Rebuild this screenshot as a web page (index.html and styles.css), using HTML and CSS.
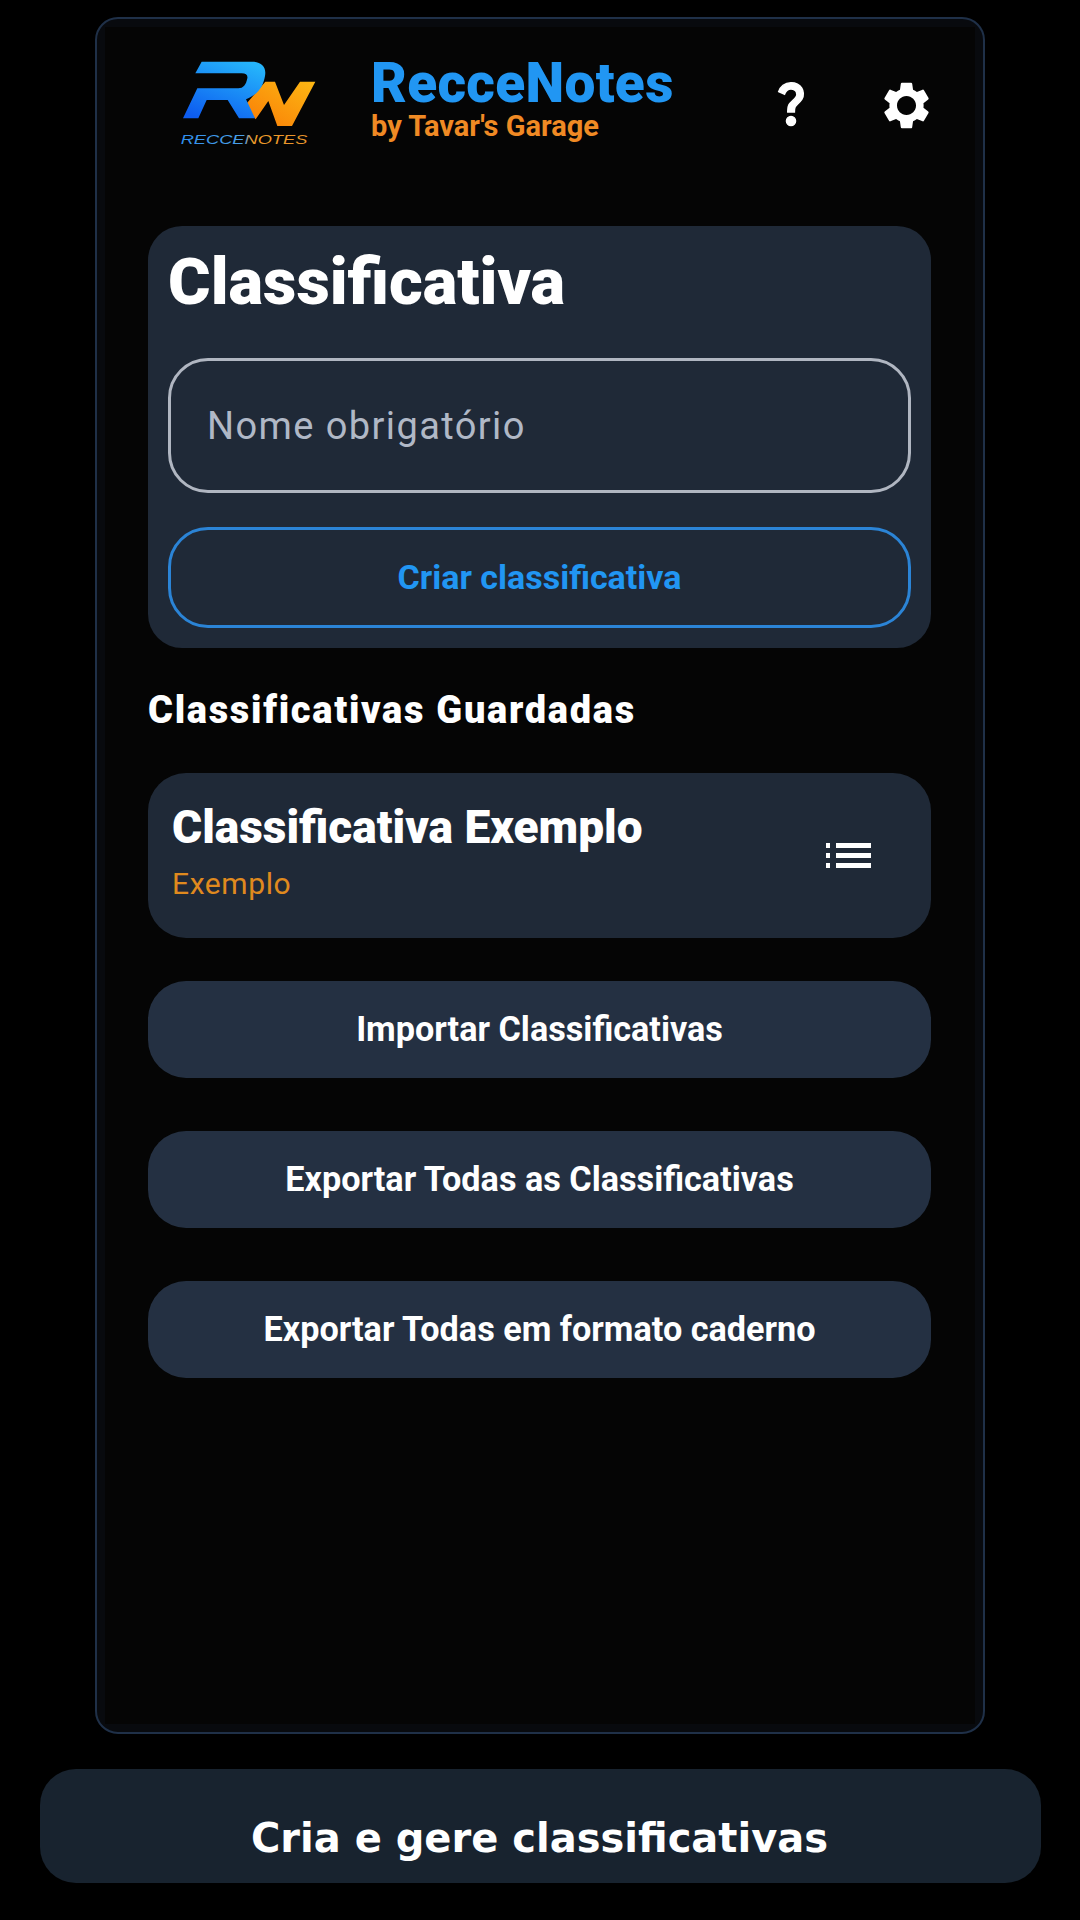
FILE: index.html
```html
<!DOCTYPE html>
<html lang="pt">
<head>
<meta charset="utf-8">
<title>RecceNotes</title>
<link rel="stylesheet" href="styles.css">
</head>
<body>
<main class="frame">
  <div class="screen">
    <header class="header">
      <svg class="logo" viewBox="0 0 540 360" aria-label="RecceNotes">
        <defs>
          <linearGradient id="rGrad" x1="0.75" y1="0" x2="0.2" y2="1">
            <stop offset="0" stop-color="#25b4fb"/>
            <stop offset="1" stop-color="#0d5cf0"/>
          </linearGradient>
          <linearGradient id="nGrad" x1="0" y1="1" x2="1" y2="0">
            <stop offset="0" stop-color="#f97b06"/>
            <stop offset="1" stop-color="#fdb813"/>
          </linearGradient>
          <linearGradient id="tGrad" x1="0" y1="0" x2="1" y2="0">
            <stop offset="0" stop-color="#2f8ef0"/>
            <stop offset="0.5" stop-color="#4aa0e8"/>
            <stop offset="0.56" stop-color="#f09a28"/>
            <stop offset="1" stop-color="#e8912a"/>
          </linearGradient>
        </defs>
        <path fill="url(#nGrad)" d="M254 197L316 125H345L372 195L420 125H466L396 258H352L325 183L287 238Z"/>
        <path fill="url(#rGrad)" d="M125 65H275C305 65 320 82 315 108C310 140 292 165 258 178L285 235H237L203 180H140L115 235H69L112 145H235C250 145 258 135 262 115C264 105 258 100 245 100H106Z"/>
        <text class="logo-text" x="62" y="311" textLength="380" lengthAdjust="spacingAndGlyphs" fill="url(#tGrad)">RECCENOTES</text>
      </svg>
      <div class="brand">
        <div class="brand-name">RecceNotes</div>
        <div class="brand-sub">by Tavar's Garage</div>
      </div>
      <div class="actions">
        <svg class="icon-help" viewBox="0 0 24 24"><path d="M11.07 12.85c.77-1.39 2.25-2.21 3.11-3.44.91-1.29.4-3.7-2.18-3.7-1.69 0-2.52 1.28-2.87 2.34L6.54 6.96C7.25 4.83 9.18 3 11.99 3c2.35 0 3.96 1.07 4.78 2.41.7 1.15 1.11 3.3.03 4.9-1.2 1.77-2.35 2.31-2.97 3.45-.25.46-.35.76-.35 2.24h-2.89c-.01-.78-.13-2.05.48-3.15zM14 20c0 1.1-.9 2-2 2s-2-.9-2-2 .9-2 2-2 2 .9 2 2z"/></svg>
        <svg class="icon-gear" viewBox="0 0 24 24"><path d="M19.14 12.94c.04-.3.06-.61.06-.94 0-.32-.02-.64-.07-.94l2.03-1.58c.18-.14.23-.41.12-.61l-1.92-3.32c-.12-.22-.37-.29-.59-.22l-2.39.96c-.5-.38-1.03-.7-1.62-.94l-.36-2.54c-.04-.24-.24-.41-.48-.41h-3.84c-.24 0-.43.17-.47.41l-.36 2.54c-.59.24-1.13.57-1.62.94l-2.39-.96c-.22-.08-.47 0-.59.22L2.74 8.87c-.12.21-.08.47.12.61l2.03 1.58c-.05.3-.09.63-.09.94s.02.64.07.94l-2.03 1.58c-.18.14-.23.41-.12.61l1.92 3.32c.12.22.37.29.59.22l2.39-.96c.5.38 1.03.7 1.62.94l.36 2.54c.05.24.24.41.48.41h3.84c.24 0 .44-.17.47-.41l.36-2.54c.59-.24 1.13-.56 1.62-.94l2.39.96c.22.08.47 0 .59-.22l1.92-3.32c.12-.22.07-.47-.12-.61l-2.01-1.58zM12 16c-2.2 0-4-1.8-4-4s1.8-4 4-4 4 1.8 4 4-1.8 4-4 4z"/></svg>
      </div>
    </header>

    <section class="create-card">
      <h1 class="create-title">Classificativa</h1>
      <input class="name-input" type="text" placeholder="Nome obrigatório">
      <button class="create-btn" type="button">Criar classificativa</button>
    </section>

    <h2 class="saved-heading">Classificativas Guardadas</h2>

    <article class="saved-item">
      <div class="saved-text">
        <div class="saved-name">Classificativa Exemplo</div>
        <div class="saved-sub">Exemplo</div>
      </div>
      <svg class="icon-list" viewBox="0 0 45 25"><path d="M0 0h4v5H0zM10 0h35v5H10zM0 10h4v5H0zM10 10h35v5H10zM0 20h4v5H0zM10 20h35v5H10z"/></svg>
    </article>

    <div class="action-list">
      <button class="action-btn" type="button">Importar Classificativas</button>
      <button class="action-btn" type="button">Exportar Todas as Classificativas</button>
      <button class="action-btn" type="button">Exportar Todas em formato caderno</button>
    </div>
  </div>
</main>
<footer class="footer">Cria e gere classificativas</footer>
</body>
</html>
```
FILE: styles.css
```css
* { box-sizing: border-box; }
html, body { margin: 0; padding: 0; }
body {
  width: 1080px;
  height: 1920px;
  background: #000;
  color: #fff;
  font-family: Roboto, sans-serif;
  padding-top: 17px;
  overflow: hidden;
}
.frame {
  width: 890px;
  height: 1717px;
  margin: 0 auto;
  padding: 8px;
  border: 2px solid #1f3048;
  border-radius: 23px;
  background: #080a0e;
}
.screen {
  height: 100%;
  padding: 0 44px 0 43px;
  background: #050505;
  overflow: hidden;
}
.header {
  display: flex;
  align-items: center;
  height: 152px;
  margin: 0 -4px 47px 0;
  padding-left: 12px;
}
.logo { width: 180px; height: 120px; flex: none; margin-bottom: 6px; }
.logo-text {
  font-family: "Liberation Sans", sans-serif;
  font-style: italic;
  font-size: 38px;
}
.brand { margin: 0 0 10px 31px; }
.brand-name {
  font-size: 55px;
  font-weight: 900;
  line-height: 56px;
  letter-spacing: 0.3px;
  color: #2196f3;
}
.brand-sub {
  font-size: 29px;
  font-weight: 700;
  line-height: 30px;
  color: #f08a24;
}
.actions {
  display: flex;
  align-items: center;
  gap: 60px;
  margin-left: auto;
}
.icon-help { width: 54px; height: 54px; fill: #fff; stroke: #fff; stroke-width: 0.7; }
.icon-gear { width: 57px; height: 57px; margin-top: 4px; fill: #fff; }
.create-card {
  display: flex;
  flex-direction: column;
  height: 422px;
  padding: 20px;
  border-radius: 34px;
  background: #1f2937;
}
.create-title {
  margin: 0 0 40px;
  font-size: 65px;
  font-weight: 900;
  line-height: 72px;
  color: #fff;
}
.name-input {
  height: 135px;
  margin-bottom: 34px;
  padding: 0 36px;
  border: 3px solid #b0b6c1;
  border-radius: 40px;
  background: transparent;
  color: #fff;
  font-family: Roboto, sans-serif;
  font-size: 38px;
  letter-spacing: 1.4px;
  outline: none;
}
.name-input::placeholder { color: #b0b8c6; opacity: 1; }
.create-btn {
  height: 101px;
  padding-bottom: 2px;
  border: 3px solid #2b84d6;
  border-radius: 40px;
  background: transparent;
  color: #2196f3;
  font-family: Roboto, sans-serif;
  font-size: 34px;
  font-weight: 700;
}
.saved-heading {
  margin: 38px 0 39px;
  font-size: 38px;
  font-weight: 900;
  line-height: 48px;
  letter-spacing: 1.7px;
  color: #fff;
}
.saved-item {
  display: flex;
  align-items: center;
  justify-content: space-between;
  height: 165px;
  padding: 0 60px 0 24px;
  border-radius: 38px;
  background: #1f2937;
}
.saved-name {
  font-size: 46px;
  font-weight: 900;
  line-height: 52px;
  color: #fff;
}
.saved-sub {
  margin-top: 13px;
  padding-bottom: 9px;
  font-size: 30px;
  line-height: 36px;
  letter-spacing: 0.6px;
  color: #e08a1e;
}
.icon-list { width: 45px; height: 25px; fill: #fff; flex: none; }
.action-list {
  display: flex;
  flex-direction: column;
  gap: 53px;
  margin-top: 43px;
}
.action-btn {
  height: 97px;
  padding-bottom: 3px;
  border: 0;
  border-radius: 38px;
  background: #243042;
  color: #fff;
  font-family: Roboto, sans-serif;
  font-size: 34.2px;
  font-weight: 700;
}
.footer {
  display: flex;
  align-items: flex-end;
  justify-content: center;
  width: 1001px;
  height: 114px;
  margin: 35px 0 0 40px;
  padding: 0 2px 21px 0;
  border-radius: 36px;
  background: #18232f;
  font-family: "DejaVu Sans", sans-serif;
  font-size: 40px;
  font-weight: 700;
  line-height: 48px;
  color: #fff;
}
```
